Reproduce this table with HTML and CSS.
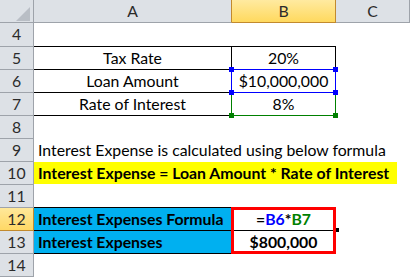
FILE: index.html
```html
<!DOCTYPE html>
<html>
<head>
<meta charset="utf-8">
<link rel="stylesheet" href="styles.css">
</head>
<body>
<div class="sheet">
  <div class="corner"><span class="tri"></span></div>
  <div class="ch ch-a">A</div>
  <div class="ch ch-sel">B</div>
  <div class="ch">C</div>

  <div class="rh">4</div>
  <div class="c tb"></div>
  <div class="c tb"></div>
  <div class="c"></div>

  <div class="rh">5</div>
  <div class="c ta">Tax Rate</div>
  <div class="c ta">20%</div>
  <div class="c"></div>

  <div class="rh">6</div>
  <div class="c ta">Loan Amount</div>
  <div class="c ta ref">$10,000,000<span class="box box-blue"><i class="h tl"></i><i class="h tr"></i><i class="h bl"></i><i class="h br"></i></span></div>
  <div class="c"></div>

  <div class="rh">7</div>
  <div class="c ta">Rate of Interest</div>
  <div class="c ta ref">8%<span class="box box-green"><i class="h bl"></i><i class="h br"></i></span></div>
  <div class="c"></div>

  <div class="rh">8</div>
  <div class="c"></div>
  <div class="c"></div>
  <div class="c"></div>

  <div class="rh">9</div>
  <div class="c wide">Interest Expense is calculated using below formula</div>

  <div class="rh">10</div>
  <div class="c wide"><span class="hl">Interest Expense = Loan Amount * Rate of Interest</span></div>

  <div class="rh">11</div>
  <div class="c tb"></div>
  <div class="c"></div>
  <div class="c"></div>

  <div class="rh rh-sel">12</div>
  <div class="c blue">Interest Expenses Formula</div>
  <div class="c res ref"><span class="f-k">=</span><span class="f-b">B6</span><span class="f-k">*</span><span class="f-g">B7</span><span class="redbox"></span><span class="handle"></span></div>
  <div class="c"></div>

  <div class="rh">13</div>
  <div class="c blue">Interest Expenses</div>
  <div class="c res">$800,000</div>
  <div class="c"></div>

  <div class="rh">14</div>
  <div class="c"></div>
  <div class="c"></div>
  <div class="c"></div>
</div>
</body>
</html>
```

FILE: styles.css
```css
* { box-sizing: border-box; }
html, body { margin: 0; padding: 0; background: #fff; }
body {
  font-family: Lato, "Open Sans", "Liberation Sans", sans-serif;
  font-size: 15.8px;
  color: #000;
  overflow: hidden;
}
.sheet {
  display: grid;
  grid-template-columns: 34px 198px 104px 74px;
  grid-template-rows: 23px 24px repeat(10, 23px);
  width: 410px;
  height: 277px;
}
.corner {
  position: relative;
  background: #dde1e6;
  border-right: 1px solid #9ea3aa;
  border-bottom: 1px solid #9ea3aa;
}
.tri {
  position: absolute;
  right: 3px;
  bottom: 1px;
  width: 0;
  height: 0;
  border-left: 14px solid transparent;
  border-bottom: 14px solid #b9bec5;
}
.ch {
  background: #dde1e6;
  border-right: 1px solid #9ea3aa;
  border-bottom: 1px solid #9ea3aa;
  color: #2b2b2b;
  text-align: center;
  line-height: 22px;
}
.ch-a { border-right-color: #c28a2e; }
.ch-sel {
  background: linear-gradient(#ffeaa0, #ffd95e);
  border-right-color: #c28a2e;
  border-bottom-color: #c28a2e;
}
.rh {
  background: #dde1e6;
  border-right: 1px solid #9ea3aa;
  border-bottom: 1px solid #9ea3aa;
  color: #2b2b2b;
  text-align: center;
  line-height: 22px;
}
.rh-sel {
  background: linear-gradient(#ffe89a, #ffd865);
  border-right-color: #c28a2e;
  border-bottom-color: #c28a2e;
}
.c {
  position: relative;
  line-height: 22px;
  white-space: nowrap;
}
.tb { border-bottom: 1px solid #000; }
.ta {
  border-right: 1px solid #000;
  border-bottom: 1px solid #000;
  text-align: center;
}
.wide {
  grid-column: 2 / 5;
  padding-left: 4px;
  overflow: visible;
}
.hl {
  display: block;
  margin-left: -4px;
  padding-left: 4px;
  width: 363px;
  background: #ffff00;
  font-weight: bold;
}
.blue {
  background: #00b0f0;
  font-weight: bold;
  padding-left: 4px;
  border-right: 1px solid #000;
  border-bottom: 1px solid #000;
}
.res {
  font-weight: bold;
  text-align: center;
  border-right: 1px solid #000;
  border-bottom: 1px solid #000;
}
.f-b { color: #0000ff; }
.f-g { color: #008000; }
.box {
  position: absolute;
  left: -1px;
  top: -1px;
  right: -1px;
  bottom: -1px;
}
.box-blue { border: 1px solid #0000ff; z-index: 3; }
.box-green { border: 1px solid #008000; z-index: 2; }
.h {
  position: absolute;
  width: 5px;
  height: 5px;
}
.box-blue .h { background: #0000ff; }
.box-green .h { background: #008000; }
.h.tl { left: -3px; top: -3px; }
.h.tr { right: -3px; top: -3px; }
.h.bl { left: -3px; bottom: -3px; }
.h.br { right: -3px; bottom: -3px; }
.redbox {
  position: absolute;
  left: -1px;
  top: -1px;
  width: 105px;
  height: 47px;
  border: 3px solid #ff0000;
  z-index: 3;
}
.handle {
  position: absolute;
  right: -4px;
  bottom: -2px;
  width: 3px;
  height: 4px;
  background: #000;
  z-index: 4;
}
```
